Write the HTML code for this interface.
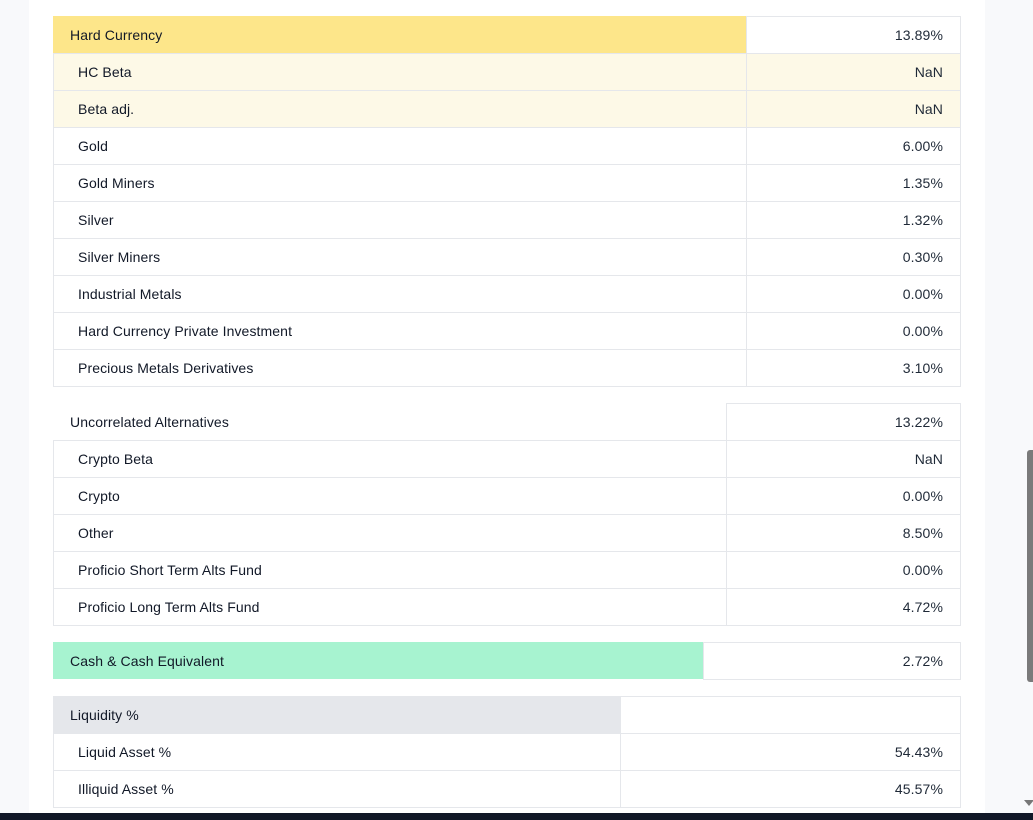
<!DOCTYPE html>
<html><head><meta charset="utf-8"><style>
*{box-sizing:border-box;margin:0;padding:0}
body{width:1033px;height:820px;background:#f8f9fb;position:relative;overflow:hidden;font-family:"Liberation Sans",sans-serif;font-size:14px;color:#1f2937}
.panel{position:absolute;left:29px;top:0;width:956px;height:813px;background:#fff}
.c{position:absolute;height:38px;line-height:37px;border:1px solid #e5e7eb;white-space:nowrap;letter-spacing:0.1px}
.l{padding-left:24px}
.h{padding-left:16px;color:#111827}
.v{text-align:right;padding-right:17px}
.b{color:#111827}
.bar{position:absolute;left:0;top:813px;width:1033px;height:7px;background:#111827}
.sb{position:absolute;left:1027px;top:450px;width:6px;height:232px;background:#7a7a7a;border-radius:3px 0 0 3px}
</style></head><body>
<div class="panel"></div>
<div id="t"></div>
<div class="sb"></div>
<div style="position:absolute;left:1024px;top:800px;width:0;height:0;border-left:5px solid transparent;border-right:5px solid transparent;border-top:6px solid #777"></div>
<div class="bar"></div>
<script>
function tbl(top,split,hdr,bg,val,rows,bgRows){
 let s='';
 const L=53,R=961;
 s+=`<div class="c h" style="left:${L}px;top:${top}px;width:${split-L+1}px;height:37px;background:${bg};border-color:${bg=='#fff'?'#fff':bg}">${hdr}</div>`;
 s+=`<div class="c v" style="left:${split}px;top:${top}px;width:${R-split}px">${val}</div>`;
 rows.forEach((r,i)=>{let y=top+37*(i+1);let b=(bgRows&&bgRows[i])||'#fff';
  s+=`<div class="c l b" style="left:${L}px;top:${y}px;width:${split-L+1}px;background:${b};border-right:none">${r[0]}</div>`;
  s+=`<div class="c v" style="left:${split}px;top:${y}px;width:${R-split}px;background:${b}">${r[1]}</div>`;});
 return s;
}
let h='';
h+=tbl(16,746,'Hard Currency','#fde68a','13.89%',[['HC Beta','NaN'],['Beta adj.','NaN'],['Gold','6.00%'],['Gold Miners','1.35%'],['Silver','1.32%'],['Silver Miners','0.30%'],['Industrial Metals','0.00%'],['Hard Currency Private Investment','0.00%'],['Precious Metals Derivatives','3.10%']],['#fdf9e7','#fdf9e7']);
h+=tbl(403,726,'Uncorrelated Alternatives','#fff','13.22%',[['Crypto Beta','NaN'],['Crypto','0.00%'],['Other','8.50%'],['Proficio Short Term Alts Fund','0.00%'],['Proficio Long Term Alts Fund','4.72%']]);
h+=tbl(642,703,'Cash &amp; Cash Equivalent','#a7f3d0','2.72%',[]);
h+=tbl(696,620,'Liquidity %','#e5e7eb','',[['Liquid Asset %','54.43%'],['Illiquid Asset %','45.57%']]);
document.getElementById('t').innerHTML=h;
</script>
</body></html>
